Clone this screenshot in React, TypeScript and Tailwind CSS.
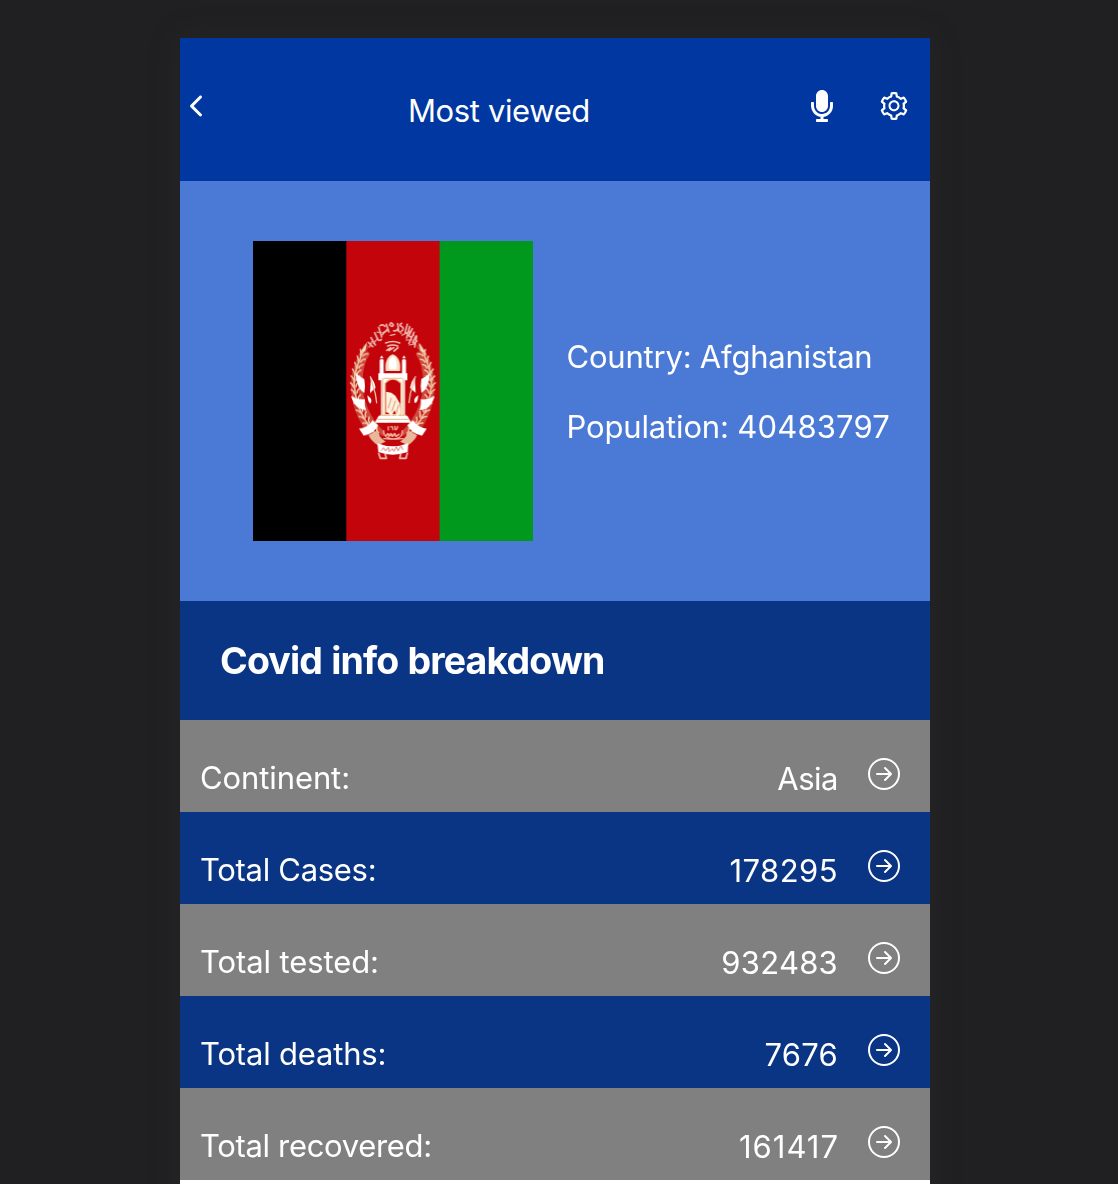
import { BsArrowRightCircle } from "react-icons/bs";
import { FaMicrophone } from "react-icons/fa";
import { IoIosArrowBack } from "react-icons/io";
import { AiOutlineSetting } from "react-icons/ai";

const stats = [
  { label: "Continent:", value: "Asia", labelClass: "tracking-[-0.1px]", valueClass: "tracking-[-0.5px]" },
  { label: "Total Cases:", value: "178295", labelClass: "tracking-[-0.3px]", valueClass: "tracking-[0.45px]" },
  { label: "Total tested:", value: "932483", labelClass: "tracking-[-0.1px]", valueClass: "tracking-[0.25px]" },
  { label: "Total deaths:", value: "7676", labelClass: "tracking-[-0.18px]", valueClass: "tracking-[0.25px]" },
  { label: "Total recovered:", value: "161417", labelClass: "tracking-[-0.33px]", valueClass: "-mr-px tracking-[1px]" },
];

const leaves = [
  [60, 132, -30], [53, 152, -20], [47, 171, -13], [42, 190, -6], [39, 210, 0], [38, 230, 4], [41, 250, 8],
  [45, 270, 13], [51, 289, 19], [59, 308, 27], [69, 326, 35], [81, 344, 43], [95, 361, 50], [110, 377, 58],
];

function WreathSide() {
  return (
    <g>
      <path d="M78 110C58 140 44 175 41 215C38 285 66 350 120 396" fill="none" stroke="#d8755c" strokeWidth="16" opacity=".5" />
      <path d="M82 132C68 150 62 178 60 215C60 265 80 325 128 370" fill="none" stroke="#dc8467" strokeWidth="14" opacity=".55" />
      {leaves.map(([x, y, r]) => (
        <g key={y} transform={`rotate(${-r} ${x} ${y})`} fill="none" stroke="#edc4a3" strokeWidth="4.5">
          <path d={`M${x - 6} ${y - 12}q7 4 8 13M${x + 20} ${y - 12}q-10 4 -10 13M${x + 5} ${y - 15}v19`} />
        </g>
      ))}
      <path d="M81 97L60 128L76 123Z" fill="#f4d8c0" />
      <path d="M47 189Q62 202 73 207Q77 229 73 249Q51 237 47 189Z" fill="#fff" />
      <path d="M33 260Q52 270 75 268Q72 286 79 301Q46 299 33 260Z" fill="#fff" />
      <path d="M57 356Q82 354 98 331L115 346Q100 373 71 377Z" fill="#fff" />
      <path d="M93 201Q104 215 107 233L90 249ZM82 256Q100 267 92 280Q84 279 82 256Z" fill="#fff" />
      <path d="M91 200L106 251L110 278" fill="none" stroke="#edc5a2" strokeWidth="4" />
    </g>
  );
}

function Flag() {
  return (
    <svg width="280" height="300" viewBox="0 0 280 300" className="block shrink-0" aria-label="Flag of Afghanistan">
      <rect width="94" height="300" fill="#000" />
      <rect x="93.3" width="94" height="300" fill="#c3040b" />
      <rect x="186.6" width="93.4" height="300" fill="#00991e" />
      <g transform="translate(87 69) scale(.33333)" strokeLinecap="round" strokeLinejoin="round" className="blur-[0.35px]">
        <WreathSide />
        <g transform="translate(317 0) scale(-1 1)"><WreathSide /></g>
        <g fill="none" stroke="#eeb5ac" strokeWidth="5">
          <path d="M85 97l13 13m-5-27l13 22m-2-37l9 20q5 7 11 0M116 52l9 29m-5-34q9-5 15 2m-6 20l13-8m-3-18l8 23m2-22q4-11 11 1q-2 8-11 0m12 17q9 3 13-7m-1-14l3 23m9-24q-10 6 1 10q8 7-2 14m18-21l-7 26q9 3 13-5m1-14l-9 34m17-28l-10 21q4 8 14-2m1-8l-15 33m20-21l-9 19q5 4 13-5m-1-15l-6 33" />
          <path d="M88 112l8-18m4 7l14-17m-3-18l14 3m2 6l16-19m8 20l14-3m7-15l12 13m2 5l16-8m-4 22l18 0m-9 15l18-3" strokeWidth="3.5" />
          <path d="M137 99q21-9 42 0M143 108q15-6 30 0M140 121l12-8m-5 9l14-9m1 10l12-10" stroke="#f0bfae" />
        </g>
        <g fill="#fff">
          <rect x="119" y="148" width="12" height="50" rx="4" />
          <rect x="186" y="148" width="12" height="50" rx="4" />
          <path d="M120 145l5-9 5 9zM187 145l5-9 5 9z" />
          <path d="M137 183C133 150 147 137 158 133C170 137 184 150 180 183Z" fill="#f7dfc2" />
          <path d="M148 178C142 154 151 143 158 138C166 143 174 154 169 178Z" />
          <path d="M115 190H202V211H195V317H202L214 338H104L116 317H123V211H115Z" />
        </g>
        <path d="M132 205H185M135 314V220Q158 194 183 220V314Z" fill="#c3040b" stroke="#f2c29a" strokeWidth="4" />
        <path d="M128 207V315M190 207V315M121 316H197M114 328H205" fill="none" stroke="#eac39c" strokeWidth="4" />
        <path d="M138 306V245L154 248L166 257L180 281L182 311L170 320L164 301L154 319L145 309Z" fill="#fff1dc" />
        <path d="M145 294l9-30m2 39l10-30m2 38l8-26" stroke="#dd9871" strokeWidth="3" />
        <g fill="none" stroke="#edb7a3" strokeWidth="4">
          <path d="M145 350v10m7-9q8-4 6 8m7-10v10m8-9l-4 9M131 362q-3 31 58 24M187 362q4 31-56 24" />
          <path d="M138 376l6-5 3 8 6-8 4 8 7-8 4 8 9-6" strokeWidth="5" />
        </g>
        <path d="M112 405Q92 392 86 376L112 361Q116 382 137 395M205 405Q225 392 231 376L205 361Q201 382 180 395" fill="#e9b79a" />
        <path d="M112 400Q157 418 205 400L203 426Q157 442 115 426Z" fill="#fff" />
        <path d="M125 421l6-8 6 10 8-11 3 13 9-9 5 8 7-14 5 13 9-16 5 11" fill="none" stroke="#df7b73" strokeWidth="3" />
        <path d="M116 430l5 15h18l-3-12M202 430l-4 15h-19l3-12" fill="none" stroke="#f5c0b5" strokeWidth="5" />
      </g>
    </svg>
  );
}

function Row({ label, value, labelClass, valueClass }: (typeof stats)[number]) {
  return (
    <div className="flex h-[92px] items-start justify-between bg-[#0a3484] pl-5 pr-[30px] odd:bg-[#808080]">
      <span className={`mt-[38px] leading-10 ${labelClass}`}>{label}</span>
      <div className="flex items-start gap-[30px]">
        <span className={`mt-[39px] leading-10 ${valueClass}`}>{value}</span>
        <BsArrowRightCircle className="mt-[38px] size-8" />
      </div>
    </div>
  );
}

export default function App() {
  return (
    <div className="flex h-[1184px] justify-center overflow-hidden bg-[#202022] pr-2 pt-[38px]">
      <main className="h-[1200px] w-[750px] bg-white font-['Inter',sans-serif] text-[31px] text-white shadow-[0_0_28px_rgba(60,55,55,0.25)]">
        <header className="flex h-[143px] items-start bg-[#0037a1]">
          <IoIosArrowBack className="mt-[52px] size-8" />
          <h1 className="ml-[196px] mt-[53px] leading-10 tracking-[-0.38px]">Most viewed</h1>
          <div className="ml-auto flex items-start gap-[45px] pr-5">
            <FaMicrophone className="mt-[52px] h-8 w-[22px]" />
            <AiOutlineSetting className="mt-[52px] size-8" />
          </div>
        </header>
        <section className="flex h-[420px] items-center bg-[#4b79d6] pl-[73px]">
          <Flag />
          <div className="ml-[33.5px] mt-0.5 flex flex-col gap-[30px]">
            <p className="leading-10 tracking-[-0.21px]">Country: Afghanistan</p>
            <p className="leading-10 tracking-[-0.15px]">
              Population: <span className="tracking-[0.15px]">40483797</span>
            </p>
          </div>
        </section>
        <div className="flex h-[119px] items-center bg-[#0a3484] pl-10">
          <h2 className="text-[37.5px] font-bold leading-none tracking-[-0.85px] [word-spacing:1px]">Covid info breakdown</h2>
        </div>
        <div>{stats.map((s) => <Row key={s.label} {...s} />)}</div>
      </main>
    </div>
  );
}
